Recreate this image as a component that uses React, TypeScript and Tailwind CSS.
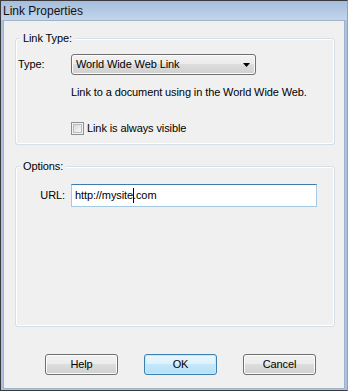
import React from "react";

const font = { fontFamily: '"Liberation Sans", Arial, sans-serif' };

function GroupBox({
  label,
  height,
  className,
  children,
}: {
  label: string;
  height: string;
  className?: string;
  children?: React.ReactNode;
}) {
  return (
    <div
      className={`relative ml-[11px] w-[320px] ${height} rounded-[3px] border border-[#d5dfe5] shadow-[inset_0_0_0_1px_#ffffff] ${className ?? ""}`}
    >
      <span className="absolute left-[4px] top-[-7px] bg-[#f0f0f0] px-[3px] text-[11px] leading-[13px] text-black">
        {label}
      </span>
      {children}
    </div>
  );
}

function Button({ children, primary }: { children: React.ReactNode; primary?: boolean }) {
  return (
    <div
      className={
        primary
          ? "flex h-[21px] w-[73px] items-center justify-center rounded-[3px] border border-[#3c7fb1] bg-[linear-gradient(to_bottom,#ebf7fd_0%,#dcf1fc_50%,#c5e8fa_50%,#b3dff5_100%)] text-[11px] leading-[13px] text-black shadow-[inset_0_0_0_1px_#c4ebfb]"
          : "flex h-[21px] w-[73px] items-center justify-center rounded-[3px] border border-[#707070] bg-[linear-gradient(to_bottom,#f2f2f2_0%,#ebebeb_50%,#dddddd_50%,#cfcfcf_100%)] text-[11px] leading-[13px] text-black shadow-[inset_0_0_0_1px_#fcfcfc]"
      }
    >
      {children}
    </div>
  );
}

export default function App() {
  return (
    <div
      style={font}
      className="flex h-[391px] w-[348px] flex-col border-y border-l border-r border-y-[#3a3a3a] border-l-[#3a3a3a] border-r-[#3cc4ee] bg-[#a9c3e1]"
    >
      {/* Title bar */}
      <div className="flex h-[19px] items-center bg-[linear-gradient(to_bottom,#a5bedd,#c3d5eb)] pl-[2px] text-[12px] leading-[14px] text-[#111]">
        Link Properties
      </div>

      {/* Client area */}
      <div className="mx-[2px] mb-[1px] flex flex-1 flex-col border border-[#9fb3ca] bg-[#f0f0f0] tracking-[-0.1px]">
        {/* Link Type group */}
        <GroupBox label="Link Type:" height="h-[107px]" className="mt-[17px]">
          <div className="flex items-center pl-[2px] pt-[15px]">
            <span className="w-[53px] text-[11px] leading-[13px] text-black">Type:</span>
            <div className="flex h-[21px] w-[185px] items-center justify-between rounded-[3px] border border-[#707070] bg-[linear-gradient(to_bottom,#f2f2f2_0%,#ebebeb_50%,#dddddd_50%,#cfcfcf_100%)] pl-[4px] pr-[4px] shadow-[inset_0_0_0_1px_#fcfcfc]">
              <span className="text-[11px] leading-[13px] text-black">World Wide Web Link</span>
              <svg width="7" height="4" viewBox="0 0 7 4" className="mr-[1px]">
                <path d="M0 0H7L3.5 4Z" fill="#000" />
              </svg>
            </div>
          </div>
          <div className="mt-[11px] pl-[55px] text-[11px] leading-[13px] text-black">
            Link to a document using in the World Wide Web.
          </div>
          <div className="mt-[23px] flex items-center pl-[55px]">
            <div className="flex h-[13px] w-[13px] items-center justify-center border border-[#8f8f8f] bg-[#f4f4f4]">
              <div className="h-[9px] w-[9px] border border-[#b7bbbf] bg-[linear-gradient(135deg,#d8dadd,#f7f7f7)]" />
            </div>
            <span className="ml-[3px] text-[11px] leading-[13px] text-black">Link is always visible</span>
          </div>
        </GroupBox>

        {/* Options group */}
        <GroupBox label="Options:" height="h-[161px]" className="mt-[21px]">
          <div className="flex items-center pt-[17px]">
            <span className="w-[49px] pr-[0px] text-right text-[11px] leading-[13px] text-black">URL:</span>
            <div className="ml-[6px] flex h-[23px] w-[246px] items-center border border-[#a4c9e3] border-t-[#3d7bad] bg-white pl-[3px]">
              <span className="text-[11px] leading-[13px] text-black">
                http://mysite
                <span className="relative">
                  .
                  <span className="absolute left-[0px] top-[-1px] h-[15px] w-[1px] bg-black" />
                </span>
                com
              </span>
            </div>
          </div>
        </GroupBox>

        {/* Buttons */}
        <div className="ml-[41px] mt-[27px] flex gap-[26px]">
          <Button>Help</Button>
          <Button primary>OK</Button>
          <Button>Cancel</Button>
        </div>
      </div>
    </div>
  );
}
